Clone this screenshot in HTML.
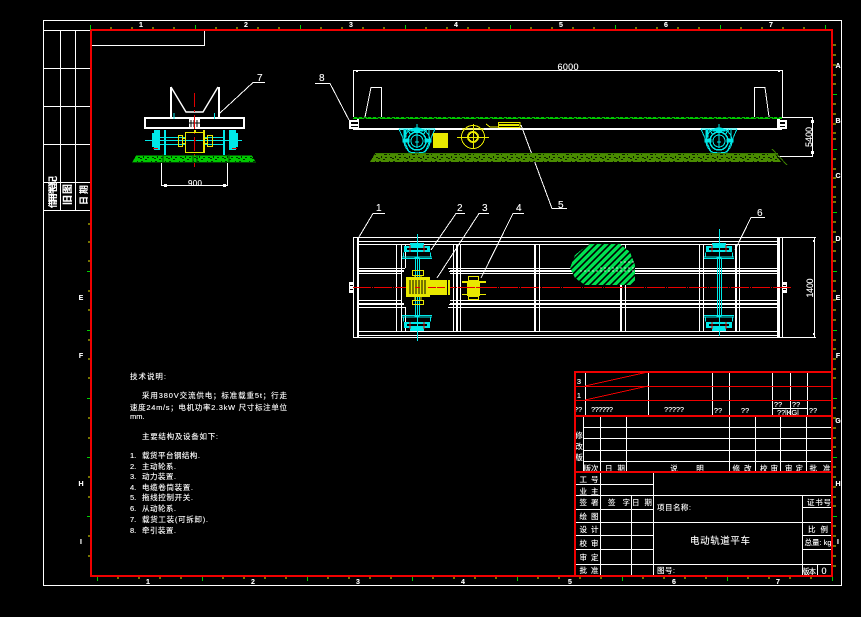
<!DOCTYPE html>
<html><head><meta charset="utf-8"><title>电动轨道平车</title>
<style>
html,body{margin:0;padding:0;background:#000;width:861px;height:617px;overflow:hidden}
svg{display:block;font-family:"Liberation Sans","Noto Sans CJK SC",sans-serif;font-size:8.5px}
text{fill:#fff;stroke:#fff;stroke-width:.12px}
.m{text-anchor:middle}
.n{font-size:9px}
.b{font-weight:700;font-size:7px}
</style></head><body>
<svg width="861" height="617" viewBox="0 0 861 617" shape-rendering="crispEdges">
<defs>
<pattern id="g1" width="14" height="8" patternUnits="userSpaceOnUse"><rect width="14" height="8" fill="#00c800"/><path d="M1 1h2v1h-2zM6 2h3v1h-3zM11 1h1v2h-1zM3 4h1v2h-1zM7 5h2v1h-2zM12 5h2v1h-2zM0 6h2v1h-2zM5 7h2v1h-2z" fill="#003000"/></pattern>
<pattern id="g2" width="14" height="8" patternUnits="userSpaceOnUse"><rect width="14" height="8" fill="#4a8c00"/><path d="M1 1h2v1h-2zM6 2h3v1h-3zM11 1h1v2h-1zM3 4h1v2h-1zM7 5h2v1h-2zM12 5h2v1h-2zM0 6h2v1h-2zM5 7h2v1h-2z" fill="#0c2000"/></pattern>
<pattern id="h" width="7" height="7" patternUnits="userSpaceOnUse"><rect width="7" height="7" fill="#00e050"/><path d="M0 7L7 0" stroke="#000" stroke-width="1.6" shape-rendering="auto"/><path d="M-3 3L3 -3M4 10L10 4" stroke="#000" stroke-width="1.6" shape-rendering="auto"/></pattern>
<g id="sw" fill="none" stroke="#00e8e8">
<circle r="13" cx="0" cy="0"/><circle r="9" cx="0" cy="0" stroke-width="1.5"/><circle r="6"/>
<path d="M-18 -12H18M-18 -12L-8 11L0 12L8 11L18 -12M-12 -12V-3M12 -12V-3M0 -17V7M-14 0H-8M8 0H14M-14 -1H-8M8 -1H14M-10 -12L-6 -6M10 -12L6 -6M-2 1H2"/>
<path d="M-14 -2h6v3h-6zM8 -2h6v3h-6zM-13 -12h2v8h-2zM-6 -11h12v1h-12z" fill="#00e8e8"/>
</g>
<g id="pw">
<path d="M-13 246H13V252H-13zM-7 243H7V246H-7z" fill="#00e8e8"/>
<rect x="-10" y="248" width="20" height="2" fill="#000"/>
<path d="M-7 245V252M7 245V252" stroke="#e00000" fill="none"/>
<path d="M-13.5 252.5V256.5M13.5 252.5V256.5M-15 257H15M-15 258.5H15M-2.500 258h5" stroke="#00e8e8" fill="none"/>
</g>
</defs>

<!-- frames -->
<rect x="43.500" y="20.500" width="798" height="565" fill="none" stroke="#fff"/>
<path d="M44 30.500H91M44 68.500H91M44 106.500H91M44 144.500H91M44 182.500H91M44 210.500H91M60.500 30V210M75.500 30V210M91 45.500H204.500V30" stroke="#fff" fill="none"/>

<!-- ticks -->
<g fill="none">
<path stroke="#e8e800" d="M111 27v2M132 27v2M153 27v2M174 27v2M216 27v2M237 27v2M258 27v2M279 27v2M321 27v2M342 27v2M363 27v2M384 27v2M426 27v2M447 27v2M468 27v2M489 27v2M531 27v2M552 27v2M573 27v2M594 27v2M636 27v2M657 27v2M678 27v2M699 27v2M741 27v2M762 27v2M783 27v2M804 27v2"/>
<path stroke="#00d000" d="M90.500 25v5M195.500 25v5M300.500 25v5M405.500 25v5M510.500 25v5M615.500 25v5M720.500 25v5M825.500 25v5"/>
<path stroke="#e8e800" d="M580 577v2M601 577v2M643 577v2M664 577v2M685 577v2M706 577v2M748 577v2M769 577v2M790 577v2M811 577v2M559 577v2M538 577v2M496 577v2M475 577v2M454 577v2M433 577v2M391 577v2M370 577v2M349 577v2M328 577v2M286 577v2M265 577v2M244 577v2M223 577v2M181 577v2M160 577v2M139 577v2M118 577v2"/>
<path stroke="#00d000" d="M832.500 576v5M727.500 576v5M622.500 576v5M517.500 576v5M412.500 576v5M307.500 576v5M202.500 576v5M97.500 576v5"/>
<path stroke="#e8e800" d="M833 45h3M833 55h3M833 65h3M833 75h3M833 84h3M833 104h3M833 114h3M833 124h3M833 133h3M833 139h3M833 159h3M833 169h3M833 178h3M833 187h3M833 197h3M833 202h3M833 222h3M833 232h3M833 242h3M833 251h3M833 261h3M833 281h3M833 291h3M833 300h3M833 310h3M833 320h3M833 340h3M833 349h3M833 359h3M833 369h3M833 378h3M833 408h3M833 418h3M833 428h3M833 438h3M833 447h3M833 467h3M833 477h3M833 487h3M833 497h3M833 506h3M833 526h3M833 536h3M833 546h3M833 556h3M833 566h3"/>
<path stroke="#00d000" d="M833 94.500h4M833 149.500h4M833 212.500h4M833 271.500h4M833 330.500h4M833 398.500h4M833 457.500h4M833 516.500h4"/>
<path stroke="#e8e800" d="M88 224h3M88 242h3M88 261h3M88 291h3M88 310h3M88 340h3M88 359h3M88 378h3M88 418h3M88 438h3M88 477h3M88 497h3M88 536h3M88 556h3"/>
<path stroke="#00d000" d="M87 271.500h4M87 330.500h4M87 398.500h4M87 457.500h4M87 516.500h4"/>
</g>
<!-- axis labels -->
<g>
<text class="m b" x="141" y="27">1</text><text class="m b" x="246" y="27">2</text><text class="m b" x="351" y="27">3</text><text class="m b" x="456" y="27">4</text><text class="m b" x="561" y="27">5</text><text class="m b" x="666" y="27">6</text><text class="m b" x="771" y="27">7</text>
<text class="m b" x="148" y="584">1</text><text class="m b" x="253" y="584">2</text><text class="m b" x="358" y="584">3</text><text class="m b" x="463" y="584">4</text><text class="m b" x="570" y="584">5</text><text class="m b" x="674" y="584">6</text><text class="m b" x="778" y="584">7</text>
<text class="m b" x="838" y="68">A</text><text class="m b" x="838" y="123">B</text><text class="m b" x="838" y="178">C</text><text class="m b" x="838" y="241">D</text><text class="m b" x="838" y="300">E</text><text class="m b" x="838" y="358">F</text><text class="m b" x="838" y="423">G</text><text class="m b" x="838" y="486">H</text><text class="m b" x="838" y="544">I</text>
<text class="m b" x="81" y="300">E</text><text class="m b" x="81" y="358">F</text><text class="m b" x="81" y="486">H</text><text class="m b" x="81" y="544">I</text>
</g>

<!-- left column text -->
<g style="font-weight:700">
<text transform="translate(56,208) rotate(-90)" style="font-size:9px" textLength="32">借用件登记</text>
<text transform="translate(71,205) rotate(-90)" style="font-size:10px" textLength="21">旧图</text>
<text transform="translate(87,205) rotate(-90)" style="font-size:9px" textLength="20">日期</text>
</g>

<!-- left view -->
<path d="M171 87L186 112H203L218 87" stroke="#fff" stroke-width="1.4" fill="none" shape-rendering="auto"/>
<path d="M170 87h2v30h-2zM218 87h2v30h-2z" fill="#fff"/>
<rect x="145" y="118" width="99" height="10" fill="none" stroke="#fff" stroke-width="2"/>
<path d="M189 119h11v9h-11z" fill="#fff"/><path d="M191 120v7M194 120v7M197 120v7M189 123h11" stroke="#000"/>
<path d="M174 113v6M214.500 113v6" stroke="#00e8e8"/>
<path d="M194.500 93V167" stroke="#e00000" stroke-dasharray="14 3 2 3"/>
<path d="M154 130h6v20h-6zM152 133h3v14h-3zM164 130h2v25h-2zM223 130h2v25h-2zM229 130h7v20h-7zM235 133h3v14h-3z" fill="#00e8e8"/>
<path d="M145 140.500H242M160 137.500H185M205 137.500H225M160 144.500H185M205 144.500H225" stroke="#00e8e8" fill="none"/>
<path d="M153 148.500h5M232 148.500h5" stroke="#e00000"/>
<rect x="185.500" y="132.500" width="19" height="20" fill="none" stroke="#e8e800"/>
<path d="M203 130h2v23h-2zM194 130h2v2h-2z" fill="#e8e800"/>
<rect x="178.500" y="135.500" width="4" height="11" fill="none" stroke="#e8e800"/><rect x="207.500" y="135.500" width="5" height="11" fill="none" stroke="#e8e800"/>
<path d="M183 138.500h3M183 143.500h3M204 138.500h4M204 143.500h4" stroke="#e8e800"/>
<path d="M194 140h2v1h-2z" fill="#e00000"/>
<path d="M132 163L136 155.500H252L256 163Z" fill="url(#g1)"/>
<path d="M132 162.500H256M193 156v7M197 156v7M163 154v8M229 154v8" stroke="#004000"/>
<path d="M161.500 163V186M227.500 163V186M161.500 185.500H227.500" stroke="#fff" fill="none"/>
<path d="M164 184h3v3h-3zM223 184h3v3h-3z" fill="#fff"/>
<text class="m" x="195" y="186" textLength="14" style="font-size:8px">900</text>
<path d="M220 113L253 82.500H265" stroke="#fff" fill="none"/>
<text x="257" y="81" style="font-size:10px">7</text>

<!-- side view -->
<path d="M353.500 117V70.500H782.500V117M365 117L371 87.500H381.500V117M754.500 117V87.500H765L769 117M782 117.500H813M778 156.500H813M812.500 117V156" stroke="#fff" fill="none"/>
<path d="M356 70h2v2h-2zM778 70h2v2h-2zM811 120h3v3h-3zM811 151h3v3h-3z" fill="#fff"/>
<rect x="353" y="117" width="429" height="2" fill="url(#g1)"/>
<path d="M353 128h429v2h-429zM357 119h2v10h-2zM777 119h3v10h-3z" fill="#fff"/>
<path d="M349 120h9v9h-9zM780 120h7v9h-7z" fill="#fff"/><path d="M351 122h7v2h-7zM351 126h7v1h-7zM780 122h5v2h-5zM780 126h5v1h-5z" fill="#000"/>
<text class="m" x="568" y="70" textLength="21" style="font-size:9px">6000</text>
<text class="m" transform="translate(812,137) rotate(-90)" textLength="20" style="font-size:9px">5400</text>
<use href="#sw" x="417" y="141"/><use href="#sw" x="719" y="141"/>
<path d="M433 133h15v15h-15z" fill="#e8e800"/>
<g fill="none" stroke="#e8e800"><circle cx="473" cy="137" r="11.500" stroke-width="1"/><circle cx="473" cy="137" r="5" stroke-width="2"/><path d="M457 137.500H489M473.500 124V148M462 129H484"/><path d="M486 124L490 127H498M498.500 122.500H520V127.500H498.500Z"/></g>
<path d="M499 124h20v2h-20z" fill="#e8e800"/>
<path d="M521 125L552 208.500H567" stroke="#fff" fill="none"/>
<text x="558" y="208" style="font-size:10px">5</text>
<path d="M315 83.500H330L349 120" stroke="#fff" fill="none"/>
<text x="319" y="81" style="font-size:10px">8</text>
<path d="M370 162L375 153.500H775L781 162Z" fill="url(#g2)"/>
<path d="M375 153.500H778M772 149L787 165" stroke="#3c8000" fill="none"/>

<!-- plan view -->
<path stroke="#fff" fill="none" d="M353 237.500H782M358 241.500H777M358 244.500H777M358 331.500H777M358 335.500H777M353 337.500H782M353.500 237V338M782.500 237V338M358 268.500H405M358 271.500H404M358 273.500H402M358 300.500H402M358 304.500H404M358 307.500H405M448 268.500H777M449 271.500H777M450 273.500H777M450 300.500H777M449 304.500H777M448 307.500H777M396.500 244V331M401.500 244V331M405.500 244V268M405.500 307V331M453.500 244V331M460.500 244V331M539.500 244V331M625.500 244V331M699.500 244V331M703.500 244V331M739.500 244V331"/>
<path fill="#fff" d="M357 238h2v99h-2zM456 244h2v87h-2zM534 244h2v87h-2zM620 244h2v87h-2zM735 244h2v87h-2zM777 238h3v99h-3zM358 270h46v2h-46zM358 303h46v2h-46zM450 270h327v2h-327zM450 303h327v2h-327z"/>
<path fill="#fff" d="M349 282h4v11h-4zM782 282h5v11h-5z"/><path fill="#000" d="M350 285h3v1h-3zM350 289h3v1h-3zM783 285h3v1h-3zM783 289h3v1h-3z"/>
<path d="M570 268L575 255L585 247L590 244H620L630 252L635 265V280L630 285H585L575 278Z" fill="url(#h)"/>
<path d="M620 262H634M600 268H634M580 271H634" stroke="#fff" stroke-dasharray="2 2" opacity=".7"/>
<path d="M353 287.500H792" stroke="#e80000" stroke-dasharray="18 1 1 1" fill="none"/>
<g transform="translate(417,0)"><use href="#pw"/><use href="#pw" transform="translate(0,574) scale(1,-1)"/></g>
<g transform="translate(719,0)"><use href="#pw"/><use href="#pw" transform="translate(0,574) scale(1,-1)"/></g>
<path d="M717.500 258V316M721.500 258V316M417.500 234V341M719.500 229V336M415.500 258V277M419.500 258V277M415.500 297V316M419.500 297V316" stroke="#00e8e8"/>
<path d="M406 277h24v20h-24zM430 280h17v15h-17zM448 280h2v15h-2zM467 281h13v15h-13z" fill="#e8e800"/>
<path d="M410 280v14M413 280v14M416 280v14M419 280v14M422 280v14M425 280v14" stroke="#000"/>
<path d="M447 280h1v15h-1z" fill="#000"/>
<g fill="none" stroke="#e8e800"><path d="M412.500 270.500H423.500V275.500H412.500ZM415 275.500V277M421 275.500V277M412.500 300.500H423.500V304.500H412.500ZM415 297V300M421 297V300"/><path d="M468.500 276.500H478.500V280.500H468.500ZM468.500 296.500H478.500V299.500H468.500ZM462 294.500H486"/></g>
<path d="M462 281h24v2h-24z" fill="#e8e800"/>
<path d="M415 287.500H420M428 287.500H446M467 287.500H480" stroke="#e80000" stroke-dasharray="8 1"/>
<g fill="none" stroke="#fff"><path d="M359 237L373 213.500H385M431 250L456 213.500H465M437 278L479 213.500H489M481 278L513 213.500H524M735 250L751 217.500H765M782 237.500H816M782 337.500H816M814.500 238V337"/></g>
<path d="M813 240h2v2h-2zM813 333h2v2h-2z" fill="#fff"/>
<text x="376" y="211" style="font-size:10px">1</text><text x="457" y="211" style="font-size:10px">2</text><text x="482" y="211" style="font-size:10px">3</text><text x="516" y="211" style="font-size:10px">4</text><text x="757" y="216" style="font-size:10px">6</text>
<text class="m" transform="translate(813,288) rotate(-90)" textLength="19" style="font-size:9px">1400</text>

<!-- notes -->
<g style="font-size:7.500px">
<text x="130" y="379" textLength="36">技术说明:</text>
<text x="142" y="398" textLength="145">采用380V交流供电；标准载重5t；行走</text>
<text x="130" y="410" textLength="157">速度24m/s；电机功率2.3kW 尺寸标注单位</text>
<text x="130" y="419">mm.</text>
<text x="142" y="439" textLength="76">主要结构及设备如下:</text>
<text x="130" y="458">1.</text><text x="142" y="458" textLength="58">载货平台钢结构.</text>
<text x="130" y="469">2.</text><text x="142" y="469" textLength="34">主动轮系.</text>
<text x="130" y="479">3.</text><text x="142" y="479" textLength="34">动力装置.</text>
<text x="130" y="490">4.</text><text x="142" y="490" textLength="51">电缆卷筒装置.</text>
<text x="130" y="500">5.</text><text x="142" y="500" textLength="51">拖线控制开关.</text>
<text x="130" y="511">6.</text><text x="142" y="511" textLength="34">从动轮系.</text>
<text x="130" y="522">7.</text><text x="142" y="522" textLength="66">载货工装(可拆卸).</text>
<text x="130" y="533">8.</text><text x="142" y="533" textLength="34">牵引装置.</text>
</g>

<!-- title block lines -->
<path stroke="#fff" fill="none" d="M585.500 372V416M648.500 372V416M712.500 372V416M729.500 372V416M772.500 372V416M790.500 372V416M807.500 372V416M772 408.500H807M583.500 416V472M600.500 416V472M626.500 416V472M729.500 416V472M755.500 416V472M780.500 416V472M806.500 416V472M583 427.500H832M583 438.500H832M583 450.500H832M583 461.500H832"/>
<path stroke="#fff" fill="none" d="M600.500 472V576M653.500 472V576M631.500 495V576M802.500 495V576M817.500 564V576M574 484.500H653M574 495.500H832M574 509.500H653M802 507.500H832M574 522.500H832M574 535.500H653M802 535.500H832M574 549.500H653M802 549.500H832M574 564.500H832"/>
<path d="M585 386L648 372M585 400L648 386M575 386.500H832M575 400.500H832" stroke="#f00000" fill="none"/>

<!-- title block text -->
<g style="font-size:7.500px">
<text class="m" x="579" y="384">3</text><text class="m" x="579" y="398">1</text><text class="m" x="578" y="412">??</text>
<text class="m" x="602" y="412" textLength="22">??????</text><text class="m" x="674" y="412" textLength="20">?????</text><text class="m" x="718" y="413">??</text><text class="m" x="745" y="413">??</text>
<text class="m" x="778" y="407">??</text><text class="m" x="796" y="407">??</text><text class="m" x="788" y="415" textLength="22">??|KG|</text><text class="m" x="813" y="413">??</text>
<text class="m" x="579" y="438">修</text><text class="m" x="579" y="449">改</text><text class="m" x="579" y="460">版</text>
<text class="m" x="591" y="471" textLength="15">版次</text><text class="m" x="615" y="471" textLength="20">日 期</text><text class="m" x="674" y="471">说</text><text class="m" x="700" y="471">明</text>
<text class="m" x="742" y="471" textLength="19">修 改</text><text class="m" x="769" y="471" textLength="18">校 审</text><text class="m" x="794" y="471" textLength="18">审 定</text><text class="m" x="820" y="471" textLength="21">批 准</text>
<text class="m" x="589" y="482" textLength="19">工 号</text><text class="m" x="589" y="494" textLength="19">业 主</text><text class="m" x="589" y="505" textLength="19">签 署</text><text class="m" x="589" y="519" textLength="19">绘 图</text><text class="m" x="589" y="532" textLength="19">设 计</text><text class="m" x="589" y="546" textLength="19">校 审</text><text class="m" x="589" y="560" textLength="19">审 定</text><text class="m" x="589" y="573" textLength="19">批 准</text>
<text class="m" x="619" y="505" textLength="22">签 字</text><text class="m" x="642" y="505" textLength="20">日 期</text>
<text class="m" x="819" y="505" textLength="24">证书号</text><text class="m" x="818" y="532" textLength="20">比 例</text><text class="m" x="818" y="545" textLength="27">总量: kg</text>
<text class="m" x="809" y="574" textLength="14">版本</text>
<text class="m" x="824" y="574" style="font-size:9px">0</text>
<text x="657" y="510" textLength="34">项目名称:</text>
<text x="657" y="573" textLength="18">图号:</text>
</g>
<text x="690" y="544" textLength="60" style="font-size:9.500px">电动轨道平车</text>

<!-- red border (top layer) -->
<path d="M91 29h742v2H91zM90 30h2v547h-2zM831 30h2v547h-2zM90 575h743v2H90zM574 371h258v2H574zM574 371h2v205h-2zM574 415h258v2H574zM574 471h258v2H574z" fill="#f00000"/>
</svg>
</body></html>
